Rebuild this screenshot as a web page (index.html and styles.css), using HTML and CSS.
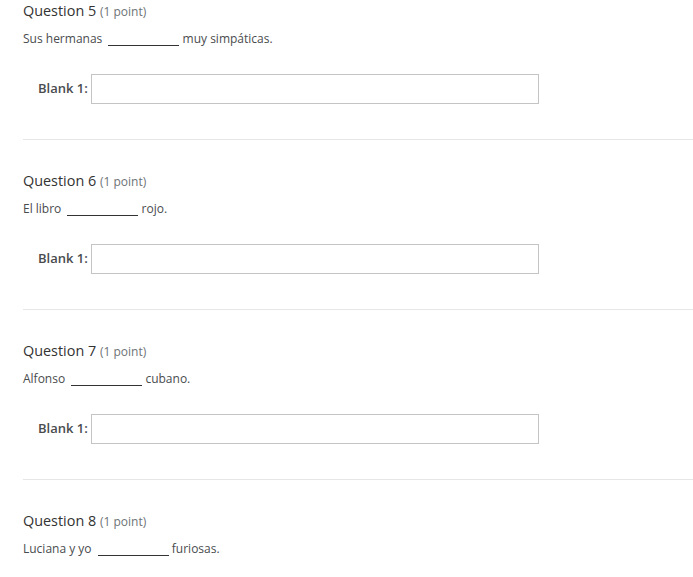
FILE: index.html
```html
<!DOCTYPE html>
<html lang="es">
<head>
<meta charset="utf-8">
<title>Quiz</title>
<link rel="stylesheet" href="styles.css">
</head>
<body>
<div class="quiz">
  <section class="question">
    <h2 class="q-title">Question 5 <span class="q-points">(1 point)</span></h2>
    <p class="q-text">Sus hermanas <span class="blank-line"></span> muy simpáticas.</p>
    <div class="blank-row">
      <label class="blank-label">Blank 1:</label>
      <input class="blank-input" type="text">
    </div>
  </section>
  <section class="question">
    <h2 class="q-title">Question 6 <span class="q-points">(1 point)</span></h2>
    <p class="q-text">El libro <span class="blank-line"></span> rojo.</p>
    <div class="blank-row">
      <label class="blank-label">Blank 1:</label>
      <input class="blank-input" type="text">
    </div>
  </section>
  <section class="question">
    <h2 class="q-title">Question 7 <span class="q-points">(1 point)</span></h2>
    <p class="q-text">Alfonso <span class="blank-line"></span> cubano.</p>
    <div class="blank-row">
      <label class="blank-label">Blank 1:</label>
      <input class="blank-input" type="text">
    </div>
  </section>
  <section class="question">
    <h2 class="q-title">Question 8 <span class="q-points">(1 point)</span></h2>
    <p class="q-text">Luciana y yo <span class="blank-line"></span> furiosas.</p>
  </section>
</div>
</body>
</html>
```

FILE: styles.css
```css
html, body {
  margin: 0;
  padding: 0;
  background: #ffffff;
}

body {
  font-family: "Open Sans", "Liberation Sans", sans-serif;
  color: #494c4e;
}

.quiz {
  padding-left: 23px;
}

.question {
  padding-top: 30px;
  padding-bottom: 35px;
  border-bottom: 1px solid #e6e6e6;
}

.question:first-child {
  padding-top: 0;
}

.q-title {
  margin: 0;
  height: 22px;
  font-size: 14.4px;
  line-height: 22px;
  font-weight: 400;
  color: #333333;
}

.q-points {
  font-size: 12px;
  color: #6e7376;
}

.q-text {
  margin: 8px 0 0;
  height: 18px;
  font-size: 12px;
  line-height: 18px;
}

.blank-line {
  display: inline-block;
  width: 71px;
  margin: 0 0 0 3px;
  border-bottom: 1px solid #333333;
  vertical-align: -3px;
}

.blank-row {
  display: flex;
  align-items: flex-start;
  gap: 3px;
  margin-top: 26px;
  margin-left: 15px;
  height: 30px;
}

.blank-label {
  padding-top: 5px;
  font-size: 13px;
  line-height: 18px;
  font-weight: 600;
  color: #494c4e;
}

.blank-input {
  box-sizing: border-box;
  width: 448px;
  height: 30px;
  margin: 0;
  border: 1px solid #c4c4c4;
  border-radius: 0;
  background: #ffffff;
  padding: 0 6px;
  font-family: inherit;
  font-size: 13px;
}
```
